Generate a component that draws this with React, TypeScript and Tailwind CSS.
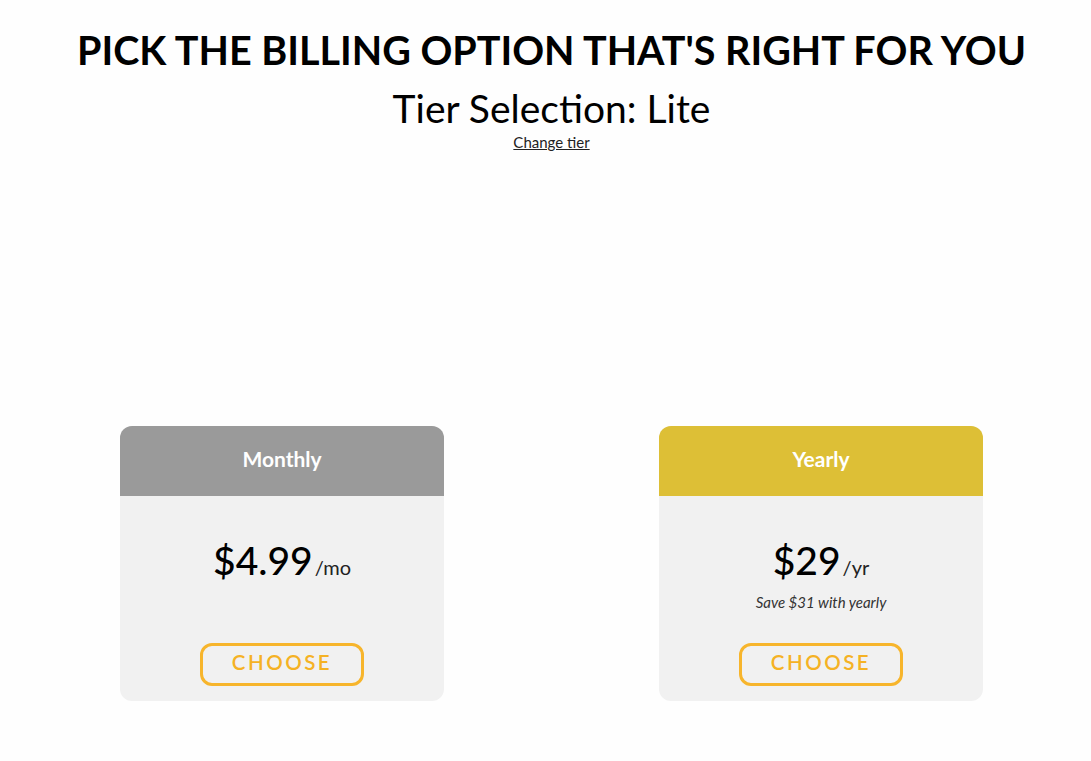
const plans = [
  { name: "Monthly", price: "$4.99", unit: "/mo", note: "", head: "bg-[#9a9a9a]" },
  { name: "Yearly", price: "$29", unit: "/yr", note: "Save $31 with yearly", head: "bg-[#ddbf36]" },
];

const PlanCard = ({ plan }: { plan: (typeof plans)[number] }) => (
  <div className="w-[324px] h-[275px] rounded-[12px] overflow-hidden bg-[#f1f1f1] flex flex-col">
    <div className={`${plan.head} h-[70px] pb-[4px] flex items-center justify-center`}>
      <span className="text-white text-[21px] font-bold">{plan.name}</span>
    </div>
    <div className="flex-1 flex flex-col items-center pt-[35px]">
      <div className="flex items-baseline h-[56px]">
        <span className="text-[39px] font-medium text-black">{plan.price}</span>
        <span className="text-[20px] text-[#222] ml-[2px]">{plan.unit}</span>
      </div>
      <div className="h-[20px] mt-[4px] text-[15px] italic text-[#333]">{plan.note}</div>
      <button className="mt-[32px] w-[164px] h-[43px] pb-[4px] rounded-[12px] border-[3px] border-[#f7b52c] text-[#f5b224] text-[20.5px] font-semibold tracking-[2.5px]">
        CHOOSE
      </button>
    </div>
  </div>
);

export default function App() {
  return (
    <div className="min-h-screen bg-[#fefefe] font-['Lato',sans-serif] text-black pl-[12px]">
      {/* header */}
      <div className="flex flex-col items-center pt-[24px]">
        <h1 className="text-[39.5px] font-bold leading-[52px]">PICK THE BILLING OPTION THAT'S RIGHT FOR YOU</h1>
        <h2 className="text-[39px] leading-[46px] mt-[9px]">Tier Selection: Lite</h2>
        <a className="text-[15px] underline text-[#222] leading-[18px] mt-[2px]">Change tier</a>
      </div>

      {/* plans */}
      <div className="flex justify-center gap-[215px] mt-[275px]">
        {plans.map((p) => (
          <PlanCard key={p.name} plan={p} />
        ))}
      </div>
    </div>
  );
}
